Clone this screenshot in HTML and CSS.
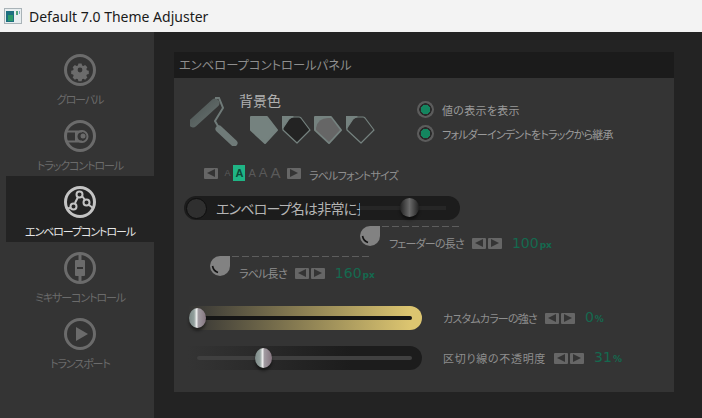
FILE: index.html
```html
<!DOCTYPE html>
<html lang="ja">
<head>
  <meta charset="UTF-8">
  <title>Default 7.0 Theme Adjuster</title>
  <link rel="stylesheet" href="styles.css">
</head>
<body>
  <div class="titlebar">
    <svg class="app-icon" width="18" height="16" viewBox="0 0 18 16">
      <rect x="0.5" y="0.5" width="17" height="15" fill="#e8eef0" stroke="#a9b3b8"/>
      <rect x="2" y="3" width="8" height="11" fill="#1d6f80"/>
      <rect x="4" y="7" width="5" height="6" fill="#2c9a6a"/>
      <rect x="12" y="3" width="2" height="4" fill="#4fa37c"/>
      <rect x="15" y="3" width="1" height="3" fill="#7fa9c9"/>
    </svg>
    <span class="app-title">Default 7.0 Theme Adjuster</span>
  </div>

  <div class="window">
    <nav class="sidebar">
      <div class="nav-item">
        <svg class="nav-icon" viewBox="0 0 32 32">
          <circle cx="16" cy="16" r="14.5"/>
          <path class="solid" fill-rule="evenodd" d="M14 8h4l.6 2.4 1.7.7 2.1-1.3 2.8 2.8-1.3 2.1.7 1.7 2.4.6v4l-2.4.6-.7 1.7 1.3 2.1-2.8 2.8-2.1-1.3-1.7.7-.6 2.4h-4l-.6-2.4-1.7-.7-2.1 1.3-2.8-2.8 1.3-2.1-.7-1.7-2.4-.6v-4l2.4-.6.7-1.7-1.3-2.1 2.8-2.8 2.1 1.3 1.7-.7z M16 13a3 3 0 1 0 0 6 3 3 0 0 0 0-6z" transform="translate(3.2 3.2) scale(.8)"/>
        </svg>
        <span class="nav-label">グローバル</span>
      </div>
      <div class="nav-item">
        <svg class="nav-icon" viewBox="0 0 32 32">
          <circle cx="16" cy="16" r="14.5"/>
          <path class="thin" d="M2 11.5h16M2 21.5h16M12 11.5v10"/>
          <circle class="thin" cx="18" cy="16.5" r="5.5"/>
          <circle class="solid" cx="19" cy="16" r="2.5"/>
        </svg>
        <span class="nav-label">トラックコントロール</span>
      </div>
      <div class="nav-item active">
        <svg class="nav-icon" viewBox="0 0 32 32">
          <circle cx="16" cy="16" r="14.5"/>
          <path class="thin" d="M2 23l5-1.500M11 17l3-6M18 10l3 4M25 19l4 3"/>
          <circle class="thin" cx="15.500" cy="8.500" r="3"/>
          <circle class="thin" cx="9.500" cy="20.500" r="3"/>
          <circle class="thin" cx="22.500" cy="16.500" r="3"/>
        </svg>
        <span class="nav-label">エンベロープコントロール</span>
      </div>
      <div class="nav-item">
        <svg class="nav-icon" viewBox="0 0 32 32">
          <circle cx="16" cy="16" r="14.5"/>
          <path d="M16 2v28"/>
          <rect class="solid" x="11" y="8" width="10" height="16" rx="1"/>
          <rect x="13" y="15" width="6" height="2" class="cut"/>
        </svg>
        <span class="nav-label">ミキサーコントロール</span>
      </div>
      <div class="nav-item">
        <svg class="nav-icon" viewBox="0 0 32 32">
          <circle cx="16" cy="16" r="14.5"/>
          <path class="solid" d="M12 9l12 7-12 7z"/>
        </svg>
        <span class="nav-label">トランスポート</span>
      </div>
    </nav>

    <main class="panel">
      <h1 class="panel-title">エンベロープコントロールパネル</h1>

      <div class="panel-body">
        <div class="top-row">
          <svg class="roller" width="48" height="50" viewBox="0 0 48 50">
            <defs>
              <linearGradient id="rollerFill" x1="0" y1="0" x2="1" y2="1">
                <stop offset="0" stop-color="#4d5554"/>
                <stop offset="1" stop-color="#66706e"/>
              </linearGradient>
            </defs>
            <path d="M3 27L25 7" stroke="url(#rollerFill)" stroke-width="9" stroke-linecap="round" fill="none"/>
            <path d="M25 2h4l4 10-8 13 4 7" stroke="#6f7a78" stroke-width="2" fill="none"/>
            <path d="M29 33L44 47" stroke="#6f7a78" stroke-width="7" stroke-linecap="round" fill="none"/>
          </svg>

          <div class="bg-color">
            <div class="bg-color-title">背景色</div>
            <div class="swatches">
              <svg class="swatch" width="30" height="30" viewBox="0 0 30 30">
                <path d="M1 1h16l10 13-12 13L1 14z" fill="#75827f" stroke="#75827f" stroke-width="2" stroke-linejoin="round"/>
              </svg>
              <svg class="swatch" width="30" height="30" viewBox="0 0 30 30">
                <path d="M0 0h12L1 12 0 14z" fill="#75827f"/>
                <path d="M1 12L7 3Q9 1 12 1h5q1 0 2 1l9 12-13 13L1 14z" fill="#232323" stroke="#75827f" stroke-width="1.2" stroke-linejoin="round"/>
              </svg>
              <svg class="swatch" width="30" height="30" viewBox="0 0 30 30">
                <path d="M1 1h16l10 13-12 13L1 14z" fill="#75827f" stroke="#75827f" stroke-width="2" stroke-linejoin="round"/>
                <path d="M2 12Q4 2 14 2h3l9 12-11 12L2 14z" fill="#666"/>
              </svg>
              <svg class="swatch" width="30" height="30" viewBox="0 0 30 30">
                <path d="M0 0h12L1 12 0 14z" fill="#75827f"/>
                <path d="M1 12L7 3Q9 1 12 1h5q1 0 2 1l9 12-13 13L1 14z" fill="#343434" stroke="#75827f" stroke-width="1.2" stroke-linejoin="round"/>
              </svg>
            </div>
          </div>

          <div class="options">
            <label class="option"><span class="radio"></span>値の表示を表示</label>
            <label class="option tight"><span class="radio"></span>フォルダーインデントをトラックから継承</label>
          </div>
        </div>

        <div class="font-row">
          <span class="arrows"><span class="arrow left"></span></span>
          <span class="sizes">
            <span class="size s1">A</span>
            <span class="size s2 on">A</span>
            <span class="size s3">A</span>
            <span class="size s4">A</span>
            <span class="size s5">A</span>
          </span>
          <span class="arrows"><span class="arrow right"></span></span>
          <span class="label font-label">ラベルフォントサイズ</span>
        </div>

        <div class="env-strip">
          <span class="env-knob"></span>
          <span class="env-name">エンベロープ名は非常に長</span>
          <span class="env-track"><span class="thumb dark"></span></span>
        </div>

        <div class="length-row fader-length">
          <svg class="tab" width="20" height="20" viewBox="0 0 20 20"><path d="M0 10a10 10 0 0 1 10-10h10v10a10 10 0 0 1-20 0z" fill="#828282"/><path d="M2.500 10q1 5 5.500 6.500" stroke="#111" stroke-width="1.600" fill="none"/></svg>
          <div class="length-main">
            <div class="dash"></div>
            <div class="length-text">
              <span class="label">フェーダーの長さ</span>
              <span class="arrows"><span class="arrow left"></span><span class="arrow right"></span></span>
              <span class="value">100<small>px</small></span>
            </div>
          </div>
        </div>

        <div class="length-row label-length">
          <svg class="tab" width="20" height="20" viewBox="0 0 20 20"><path d="M0 10a10 10 0 0 1 10-10h10v10a10 10 0 0 1-20 0z" fill="#828282"/><path d="M2.500 10q1 5 5.500 6.500" stroke="#111" stroke-width="1.600" fill="none"/></svg>
          <div class="length-main">
            <div class="dash long"></div>
            <div class="length-text">
              <span class="label">ラベル長さ</span>
              <span class="arrows"><span class="arrow left"></span><span class="arrow right"></span></span>
              <span class="value">160<small>px</small></span>
            </div>
          </div>
        </div>

        <div class="slider-row color-row">
          <div class="slider gold"><span class="rail"></span><span class="thumb"></span></div>
          <span class="label">カスタムカラーの強さ</span>
          <span class="arrows"><span class="arrow left"></span><span class="arrow right"></span></span>
          <span class="value">0<small>%</small></span>
        </div>

        <div class="slider-row opacity-row">
          <div class="slider dim"><span class="rail"></span><span class="thumb"></span></div>
          <span class="label wide">区切り線の不透明度</span>
          <span class="arrows"><span class="arrow left"></span><span class="arrow right"></span></span>
          <span class="value">31<small>%</small></span>
        </div>
      </div>
    </main>
  </div>
</body>
</html>
```

FILE: styles.css
```css
* {
  box-sizing: border-box;
}

html, body {
  margin: 0;
  height: 100%;
  overflow: hidden;
}

body {
  display: flex;
  flex-direction: column;
  background: #232323;
  font-family: "Noto Sans CJK JP", "Noto Sans", sans-serif;
  font-feature-settings: "palt";
}

.titlebar {
  height: 32px;
  flex: none;
  display: flex;
  align-items: center;
  gap: 7px;
  padding-left: 4px;
  background: #f3f3f3;
}

.app-title {
  font-family: "Noto Sans", sans-serif;
  font-size: 14px;
  color: #1a1a1a;
}

.window {
  flex: 1;
  display: flex;
}

/* left nav */
.sidebar {
  width: 154px;
  flex: none;
  padding: 12px 0 0 6px;
  background: #343434;
}

.nav-item {
  height: 66px;
  display: flex;
  flex-direction: column;
  align-items: center;
  padding-top: 10px;
  color: #6b6b6b;
}

.nav-item.active {
  background: #232323;
  color: #e6e6e6;
}

.nav-icon {
  width: 32px;
  height: 32px;
  fill: none;
  stroke: #6b6b6b;
  stroke-width: 3;
}

.nav-icon .solid {
  fill: #6b6b6b;
  stroke: none;
}

.nav-icon .cut {
  fill: #343434;
  stroke: none;
}

.nav-icon .thin {
  stroke-width: 2;
}

.active .nav-icon {
  stroke: #c4c4c4;
}

.nav-label {
  margin-top: 5px;
  font-size: 11px;
  letter-spacing: -1.1px;
  line-height: 16px;
  white-space: nowrap;
}

/* panel */
.panel {
  width: 500px;
  height: 340px;
  margin: 20px 0 0 20px;
  display: flex;
  flex-direction: column;
  background: #343434;
}

.panel-title {
  height: 26px;
  flex: none;
  margin: 0;
  padding-left: 5px;
  background: #1b1b1b;
  color: #8e8e8e;
  font-size: 12.3px;
  font-weight: normal;
  line-height: 26px;
}

.panel-body {
  flex: 1;
  padding-left: 10px;
  display: flex;
  flex-direction: column;
}

.top-row {
  height: 86px;
  display: flex;
}

.roller {
  margin: 18px 0 0 6px;
}

.bg-color {
  margin-left: 1px;
}

.bg-color-title {
  margin-top: 12px;
  color: #b0b0b0;
  font-size: 14px;
  line-height: 20px;
}

.swatches {
  display: flex;
  gap: 2px;
  margin-top: 6px;
  margin-left: 11px;
}

.options {
  margin: 23px 0 0 41px;
  display: flex;
  flex-direction: column;
  gap: 7px;
}

.option {
  display: flex;
  align-items: center;
  gap: 8px;
  height: 17px;
  color: #9a9a9a;
  font-size: 11px;
  letter-spacing: .3px;
  white-space: nowrap;
}

.option.tight {
  letter-spacing: -.8px;
}

.radio {
  width: 17px;
  height: 17px;
  flex: none;
  border-radius: 50%;
  background: radial-gradient(circle, #14855f 0 4.5px, #2a2a2a 5px 6px, #5c5c5c 6.5px);
}

.label {
  color: #8e8e8e;
  font-size: 11px;
  letter-spacing: -.8px;
  white-space: nowrap;
}

.label.wide {
  letter-spacing: .7px;
}

/* arrow buttons */
.arrows {
  display: inline-flex;
  flex: none;
  gap: 2px;
}

.arrow {
  width: 14px;
  height: 11px;
  display: flex;
  align-items: center;
  justify-content: center;
  background: #666;
  border-radius: 1px;
}

.arrow::before {
  content: "";
  border-top: 4px solid transparent;
  border-bottom: 4px solid transparent;
}

.arrow.left::before {
  border-right: 8px solid #343434;
}

.arrow.right::before {
  border-left: 8px solid #343434;
}

.font-row {
  height: 18px;
  padding-left: 20px;
  display: flex;
  align-items: center;
}

.sizes {
  width: 69px;
  display: flex;
  align-items: flex-end;
  justify-content: center;
  gap: 3px;
  font-family: "Liberation Sans", sans-serif;
  color: #5a5a5a;
}

.size {
  line-height: 16px;
}

.s1 { font-size: 9px; }
.s2 { font-size: 11px; }
.s3 { font-size: 11px; }
.s4 { font-size: 13px; }
.s5 { font-size: 15px; }

.size.on {
  width: 12px;
  text-align: center;
  background: #1fb585;
  color: #0c4a37;
  font-weight: bold;
}

.font-label {
  margin: 3px 0 0 8px;
}

/* envelope name strip */
.env-strip {
  width: 276px;
  height: 24px;
  margin-top: 14px;
  display: flex;
  align-items: center;
  border-radius: 12px;
  background: #1c1c1c;
}

.env-knob {
  width: 21px;
  height: 21px;
  flex: none;
  margin-left: 2px;
  border-radius: 50%;
  background: #2f2f2f;
  border: 1px solid #0e0e0e;
}

.env-name {
  width: 144px;
  flex: none;
  margin-left: 9px;
  overflow: hidden;
  color: #b4b4b4;
  font-size: 14px;
  letter-spacing: -.8px;
  line-height: 20px;
  white-space: nowrap;
}

.env-track {
  width: 86px;
  height: 4px;
  flex: none;
  position: relative;
  background: #262626;
}

.thumb {
  position: absolute;
  width: 17px;
  height: 20px;
  top: -8px;
  left: 40px;
  border-radius: 50%;
  background: linear-gradient(to right, #7d8a88, #93a09d 30%, #eee 45%, #a09aa0 55%, #85757f);
  box-shadow: 0 3px 3px rgba(0, 0, 0, .45);
}

.thumb.dark {
  width: 19px;
  height: 19px;
  background: linear-gradient(to right, #222, #6a6a6a 50%, #222);
}

/* length rows */
.length-row {
  height: 22px;
  display: flex;
}

.tab {
  flex: none;
}

.fader-length {
  margin: 6px 0 0 176px;
}

.label-length {
  margin: 8px 0 0 26px;
}

.length-main {
  margin-left: 2px;
}

.dash {
  width: 78px;
  height: 1px;
  background: repeating-linear-gradient(to right, #5d5d5d 0 7px, transparent 7px 10px);
}

.dash.long {
  width: 138px;
}

.length-text {
  height: 16px;
  margin-top: 8px;
  padding-left: 7px;
  display: flex;
  align-items: center;
  gap: 8px;
}

.value {
  margin-left: 2px;
  color: #14694f;
  font-family: "DejaVu Sans", sans-serif;
  font-size: 14px;
  line-height: 16px;
  white-space: nowrap;
}

.length-text .value {
  margin-top: 2px;
}

.value small {
  font-size: 9px;
  font-weight: bold;
  margin-left: 1px;
}

/* sliders */
.slider-row {
  display: flex;
  align-items: center;
  gap: 8px;
  height: 24px;
}

.color-row {
  margin-top: 28px;
}

.opacity-row {
  margin-top: 16px;
}

.slider {
  width: 234px;
  height: 24px;
  flex: none;
  margin: 0 13px 0 4px;
  position: relative;
  border-radius: 0 12px 12px 0;
}

.slider.gold {
  background: linear-gradient(to right, #343434, #dcc570 95%);
}

.slider.dim {
  background: linear-gradient(to right, #343434, #1c1c1c 70%);
}

.rail {
  position: absolute;
  left: 9px;
  right: 10px;
  top: 10px;
  height: 4px;
  border-radius: 2px;
  background: #151515;
}

.dim .rail {
  background: #404040;
}

.gold .thumb {
  top: 2px;
  left: 1px;
}

.dim .thumb {
  top: 2px;
  left: 67px;
}
```
